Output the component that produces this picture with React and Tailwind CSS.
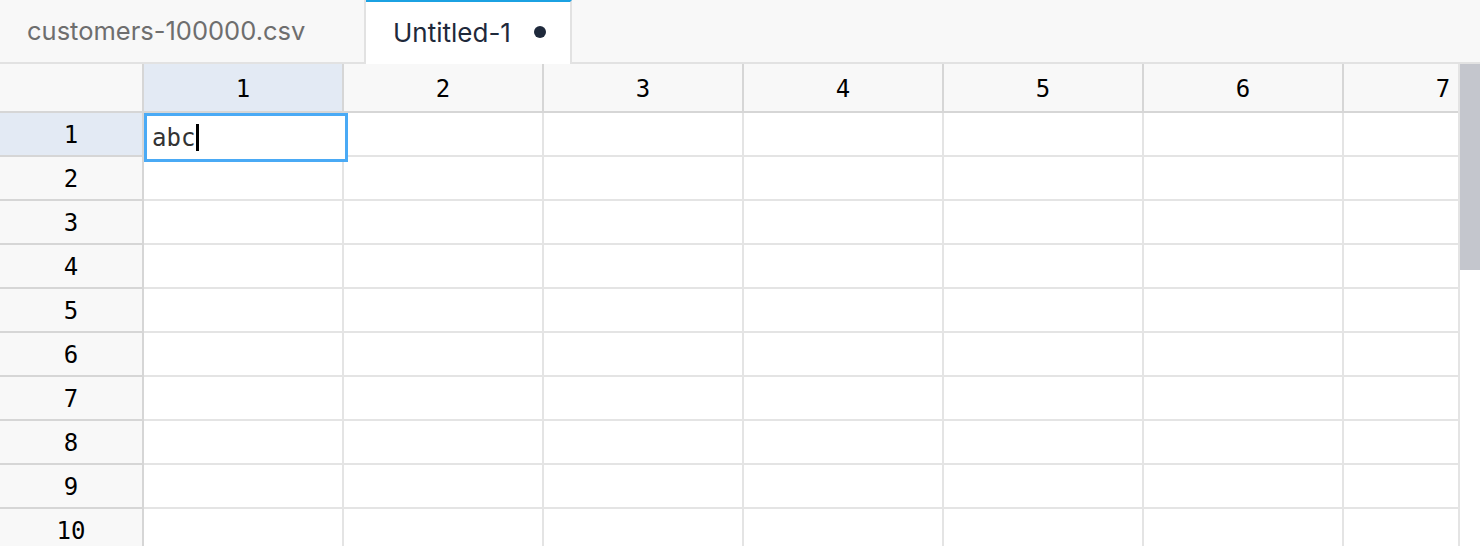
import React from "react";

const COLUMNS = [1, 2, 3, 4, 5, 6, 7, 8];
const ROWS = [1, 2, 3, 4, 5, 6, 7, 8, 9, 10, 11];

const mono = { fontFamily: '"DejaVu Sans Mono", monospace' };

function Tabs() {
  return (
    <div className="flex h-[64px] shrink-0 bg-[#f8f8f8]" style={{ fontFamily: "Inter, sans-serif" }}>
      <div className="flex w-[366px] items-center border-r-2 border-b-2 border-[#e2e2e2] pl-[27px] text-[25.5px] text-[#6e6e6e]">
        customers-100000.csv
      </div>
      <div className="flex w-[206px] items-center border-t-2 border-r-2 border-t-[#1ba1e2] border-r-[#e2e2e2] bg-white pb-[2px] pl-[27px] text-[26px] text-[#1e293b]">
        <span>Untitled-1</span>
        <span className="ml-[23px] h-[12px] w-[12px] rounded-full bg-[#1e293b]" />
      </div>
      <div className="flex-1 border-b-2 border-[#e2e2e2]" />
    </div>
  );
}

function HeaderRow() {
  return (
    <div className="flex h-[49px] shrink-0 border-b-2 border-[#d6d6d6] bg-[#f8f8f8]">
      <div className="w-[144px] shrink-0 border-r-2 border-[#d6d6d6]" />
      {COLUMNS.map((col) => (
        <div
          key={col}
          className={`flex w-[200px] shrink-0 items-center justify-center border-r-2 border-[#d6d6d6] pt-[3px] text-[24px] text-black ${
            col === 1 ? "bg-[#e3eaf4]" : ""
          }`}
          style={mono}
        >
          {col}
        </div>
      ))}
    </div>
  );
}

function Row({ n }) {
  return (
    <div className="flex h-[44px] shrink-0">
      <div
        className={`flex w-[144px] shrink-0 items-center justify-center border-r-2 border-b-2 border-[#d6d6d6] pt-[2px] text-[24px] text-black ${
          n === 1 ? "bg-[#e3eaf4]" : "bg-[#f8f8f8]"
        }`}
        style={mono}
      >
        {n}
      </div>
      {COLUMNS.map((col) => (
        <div key={col} className="relative w-[200px] shrink-0 border-r-2 border-b-2 border-[#e4e4e4] bg-white">
          {n === 1 && col === 1 ? (
            <div
              className="absolute top-0 left-0 z-10 flex h-[49px] w-[204px] items-center border-[3px] border-[#4aaaf5] bg-white pl-[5px] text-[24px] text-[#333]"
              style={mono}
            >
              abc
              <span className="ml-[1px] h-[27px] w-[3px] bg-black" />
            </div>
          ) : null}
        </div>
      ))}
    </div>
  );
}

export default function App() {
  return (
    <div className="flex h-[546px] w-[1480px] flex-col overflow-hidden bg-white">
      <Tabs />
      <div className="flex min-h-0 flex-1">
        <div className="min-w-0 flex-1 overflow-hidden border-r-2 border-[#e4e4e4]">
          <HeaderRow />
          {ROWS.map((n) => (
            <Row key={n} n={n} />
          ))}
        </div>
        <div className="flex w-[20px] shrink-0 flex-col bg-white">
          <div className="h-[206px] bg-[#c4c6cd]" />
        </div>
      </div>
    </div>
  );
}
